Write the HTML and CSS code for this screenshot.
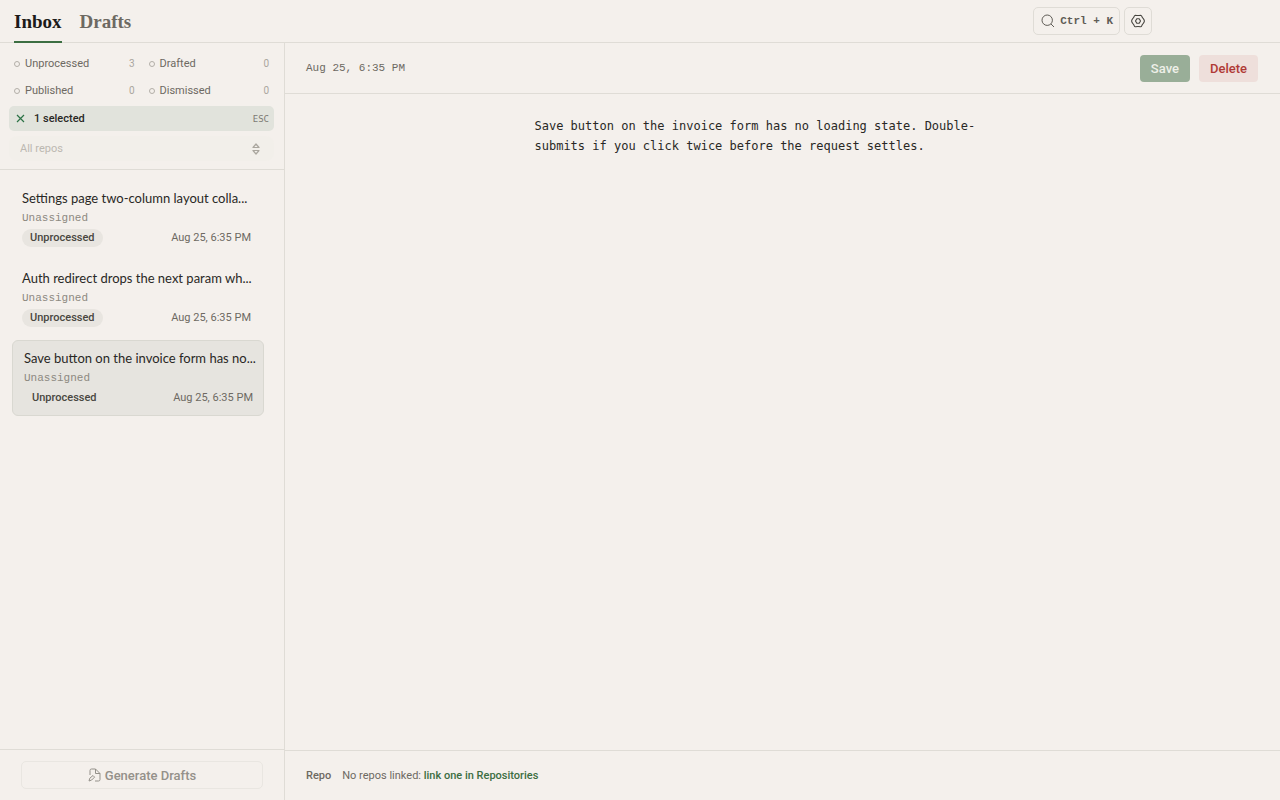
FILE: index.html
```html
<!DOCTYPE html>
<html lang="en">
<head>
<meta charset="utf-8">
<meta name="viewport" content="width=device-width, initial-scale=1">
<title>Inbox</title>
<link rel="stylesheet" href="styles.css">
</head>
<body>
<header class="topbar">
  <nav class="tabs">
    <a class="tab tab-active" href="#inbox">Inbox</a>
    <a class="tab" href="#drafts">Drafts</a>
  </nav>
  <div class="tools">
    <button class="tool search" type="button">
      <svg width="14" height="14" viewBox="0 0 14 14" fill="none" stroke="currentColor"><circle cx="6.2" cy="6.2" r="5.2"/><path d="M10 10l3 3"/></svg>
      <span>Ctrl + K</span>
    </button>
    <button class="tool settings" type="button" aria-label="Settings">
      <svg width="14" height="14" viewBox="0 0 14 14" fill="none" stroke="currentColor" stroke-width="1.1" stroke-linejoin="round"><path d="M4.500 1.200Q5.600 1.500 7 1.500t2.500-.3q.9.100 1.200 1 .5 1.500 1.600 2.500.9.900 1.100 2.300-.2 1.400-1.100 2.300-1.100 1-1.600 2.500-.3.900-1.200 1Q8.400 12.500 7 12.500t-2.500.3q-.9-.1-1.200-1-.5-1.500-1.600-2.500Q.8 8.400.6 7q.2-1.400 1.100-2.300 1.100-1 1.600-2.500.3-.9 1.200-1z"/><path d="M5.800 4.800h2.400L9.500 7 8.200 9.200H5.800L4.500 7z"/></svg>
    </button>
  </div>
</header>
<div class="workspace">
  <aside class="sidebar">
    <div class="filters">
      <div class="statuses">
        <button class="status" type="button"><i class="dot"></i>Unprocessed<span class="count">3</span></button>
        <button class="status" type="button"><i class="dot"></i>Drafted<span class="count">0</span></button>
        <button class="status" type="button"><i class="dot"></i>Published<span class="count">0</span></button>
        <button class="status" type="button"><i class="dot"></i>Dismissed<span class="count">0</span></button>
      </div>
      <button class="selection" type="button">
        <svg class="clear" width="9" height="9" viewBox="0 0 9 9" fill="none" stroke="currentColor" stroke-width="1.2"><path d="M1 1l7 7M8 1L1 8"/></svg>
        1 selected<kbd>ESC</kbd>
      </button>
      <div class="repo-filter">
        <select class="repo-select" aria-label="Repository" disabled><option>All repos</option></select>
        <svg class="chevrons" width="8" height="12" viewBox="0 0 8 12" fill="none" stroke="currentColor" stroke-width="1.2" stroke-linejoin="round"><path d="M1 4.500L4 1l3 3.500zM1 7.500h6L4 11z"/></svg>
      </div>
    </div>
    <ul class="notes">
      <li><a class="note" href="#note-1">
        <span class="note-title">Settings page two-column layout colla...</span>
        <span class="note-repo">Unassigned</span>
        <span class="note-meta"><span class="badge">Unprocessed</span><time>Aug 25, 6:35 PM</time></span>
      </a></li>
      <li><a class="note" href="#note-2">
        <span class="note-title">Auth redirect drops the next param wh...</span>
        <span class="note-repo">Unassigned</span>
        <span class="note-meta"><span class="badge">Unprocessed</span><time>Aug 25, 6:35 PM</time></span>
      </a></li>
      <li><a class="note note-selected" href="#note-3">
        <span class="note-title">Save button on the invoice form has no...</span>
        <span class="note-repo">Unassigned</span>
        <span class="note-meta"><span class="badge">Unprocessed</span><time>Aug 25, 6:35 PM</time></span>
      </a></li>
    </ul>
    <div class="generate-bar">
      <button class="generate" type="button" disabled>
        <svg width="13" height="14" viewBox="0 0 13 14" fill="none" stroke="currentColor" stroke-linejoin="round"><path d="M2 7V2.500Q2 1 3.500 1h4L12 5.500v6q0 1.500-1.500 1.500H7"/><path d="M7.500 1v4.500H12M1 13l.8-2.800L5 7.500l1.600 1.600L3.700 12z"/></svg>
        Generate Drafts
      </button>
    </div>
  </aside>
  <main class="detail">
    <div class="detail-head">
      <time class="stamp">Aug 25, 6:35 PM</time>
      <button class="action save" type="button">Save</button>
      <button class="action delete" type="button">Delete</button>
    </div>
    <p class="body">Save button on the invoice form has no loading state. Double-<wbr>submits if you click twice before the request settles.</p>
    <footer class="detail-foot">
      <span class="foot-label">Repo</span>
      <span>No repos linked: <a class="repo-link" href="#repositories">link one in Repositories</a></span>
    </footer>
  </main>
</div>
</body>
</html>
```
FILE: styles.css
```css
* { box-sizing: border-box; }

:root {
  --bg: #f4f0ec;
  --line: #dfdcd6;
  --ink: #292825;
  --muted: #6d6962;
  --faint: #aaa69e;
  --green: #3c6e42;
  --mono: "Liberation Mono", monospace;
}

body {
  margin: 0;
  min-height: 100vh;
  display: flex;
  flex-direction: column;
  background: var(--bg);
  color: var(--ink);
  font-family: Roboto, sans-serif;
  font-size: 11px;
}

button {
  font: inherit;
  color: inherit;
  border: 0;
  background: none;
  padding: 0;
}

svg { flex: none; }

.topbar {
  display: flex;
  justify-content: space-between;
  height: 43px;
  padding: 0 128px 0 14px;
  border-bottom: 1px solid var(--line);
}

.tabs { display: flex; gap: 18px; }

.tab {
  display: flex;
  align-items: center;
  height: 43px;
  padding-top: 2px;
  border-bottom: 2px solid transparent;
  font: bold 19px "Liberation Serif", serif;
  color: #6d6962;
  text-decoration: none;
}

.tab-active { color: #1c1b19; border-color: var(--green); }

.tools { display: flex; align-items: center; gap: 4px; }

.tool {
  display: flex;
  align-items: center;
  justify-content: center;
  gap: 5px;
  height: 28px;
  border: 1px solid var(--line);
  border-radius: 5px;
  color: #5f5c56;
}

.search { padding: 0 6px 0 7px; font: bold 11px var(--mono); }
.settings { width: 28px; color: #45433e; }

.workspace { flex: 1; display: flex; }

.sidebar {
  flex: none;
  width: 285px;
  display: flex;
  flex-direction: column;
  border-right: 1px solid var(--line);
}

.filters {
  padding: 7px 10px 8px 9px;
  border-bottom: 1px solid var(--line);
}

.statuses {
  display: grid;
  grid-template-columns: 1fr 1fr;
  gap: 0 4px;
  margin-bottom: 2px;
}

.status {
  display: flex;
  align-items: center;
  gap: 5px;
  height: 27px;
  padding: 0 5px;
  color: var(--muted);
}

.dot {
  width: 6px;
  height: 6px;
  border: 1px solid #b3afa8;
  border-radius: 50%;
}

.count { margin-left: auto; color: var(--faint); font-size: 10px; }

.selection {
  display: flex;
  align-items: center;
  gap: 9px;
  width: 100%;
  height: 25px;
  padding: 0 5px 0 7px;
  border-radius: 5px;
  background: #e1e3dc;
  font-weight: 500;
}

.clear { color: #2c7246; }
.selection kbd { margin-left: auto; font: 9px "DejaVu Sans Mono", monospace; color: #7c7a73; }

.repo-filter { position: relative; margin-top: 5px; }

.repo-select {
  appearance: none;
  width: 100%;
  height: 25px;
  padding: 0 11px;
  border: 0;
  border-radius: 8px;
  background: #f2efea;
  color: #bcb8b1;
  font: 11px Roboto, sans-serif;
  opacity: 1;
}

.chevrons { position: absolute; right: 14px; top: 7px; color: var(--faint); }

.notes {
  flex: 1;
  margin: 0;
  padding: 10px 20px 0 12px;
  list-style: none;
}

.note {
  display: block;
  height: 76px;
  margin-bottom: 4px;
  padding: 8px 13px 0 10px;
  color: inherit;
  text-decoration: none;
}

.note-selected {
  padding: 7px 10px 0 11px;
  border: 1px solid #d9d8d1;
  border-radius: 6px;
  background: #e6e4df;
}

.note-title {
  display: block;
  font: 13px/20px Lato, sans-serif;
  white-space: nowrap;
}

.note-repo {
  display: block;
  font: 11px/20px var(--mono);
  color: #8d8981;
}

.note-meta {
  display: flex;
  align-items: center;
  justify-content: space-between;
  height: 19px;
  color: var(--muted);
}

.badge {
  padding: 0 8px;
  border-radius: 9px;
  background: #e8e5e0;
  line-height: 18px;
  font-weight: 500;
  color: #494741;
}

.note-selected .badge { background: none; }

.generate-bar {
  height: 51px;
  padding: 11px 21px;
  border-top: 1px solid var(--line);
}

.generate {
  display: flex;
  align-items: center;
  justify-content: center;
  gap: 4px;
  width: 100%;
  height: 28px;
  border: 1px solid #e9e6e1;
  border-radius: 5px;
  color: #94918a;
  font-size: 13px;
  font-weight: 500;
}

.detail { flex: 1; min-width: 0; display: flex; flex-direction: column; }

.detail-head {
  display: flex;
  align-items: center;
  height: 51px;
  padding: 0 22px 0 21px;
  border-bottom: 1px solid var(--line);
}

.stamp { margin-right: auto; font: 11px var(--mono); color: var(--muted); }

.action {
  height: 27px;
  padding: 0 11px;
  border-radius: 4px;
  font-size: 13px;
  font-weight: 500;
}

.save { background: #99ae98; color: #eef0e8; }
.delete { margin-left: 9px; background: #eedfdb; color: #b03a36; }

.body {
  flex: 1;
  width: 100%;
  max-width: 496px;
  margin: 0 auto;
  padding: 22px 16px 0 0;
  font: 12px/20px "DejaVu Sans Mono", monospace;
}

.detail-foot {
  display: flex;
  align-items: center;
  gap: 11px;
  height: 50px;
  padding: 0 21px;
  border-top: 1px solid var(--line);
  color: var(--muted);
}

.foot-label { font-weight: 500; }
.repo-link { color: var(--green); font-weight: 500; text-decoration: none; }
```
